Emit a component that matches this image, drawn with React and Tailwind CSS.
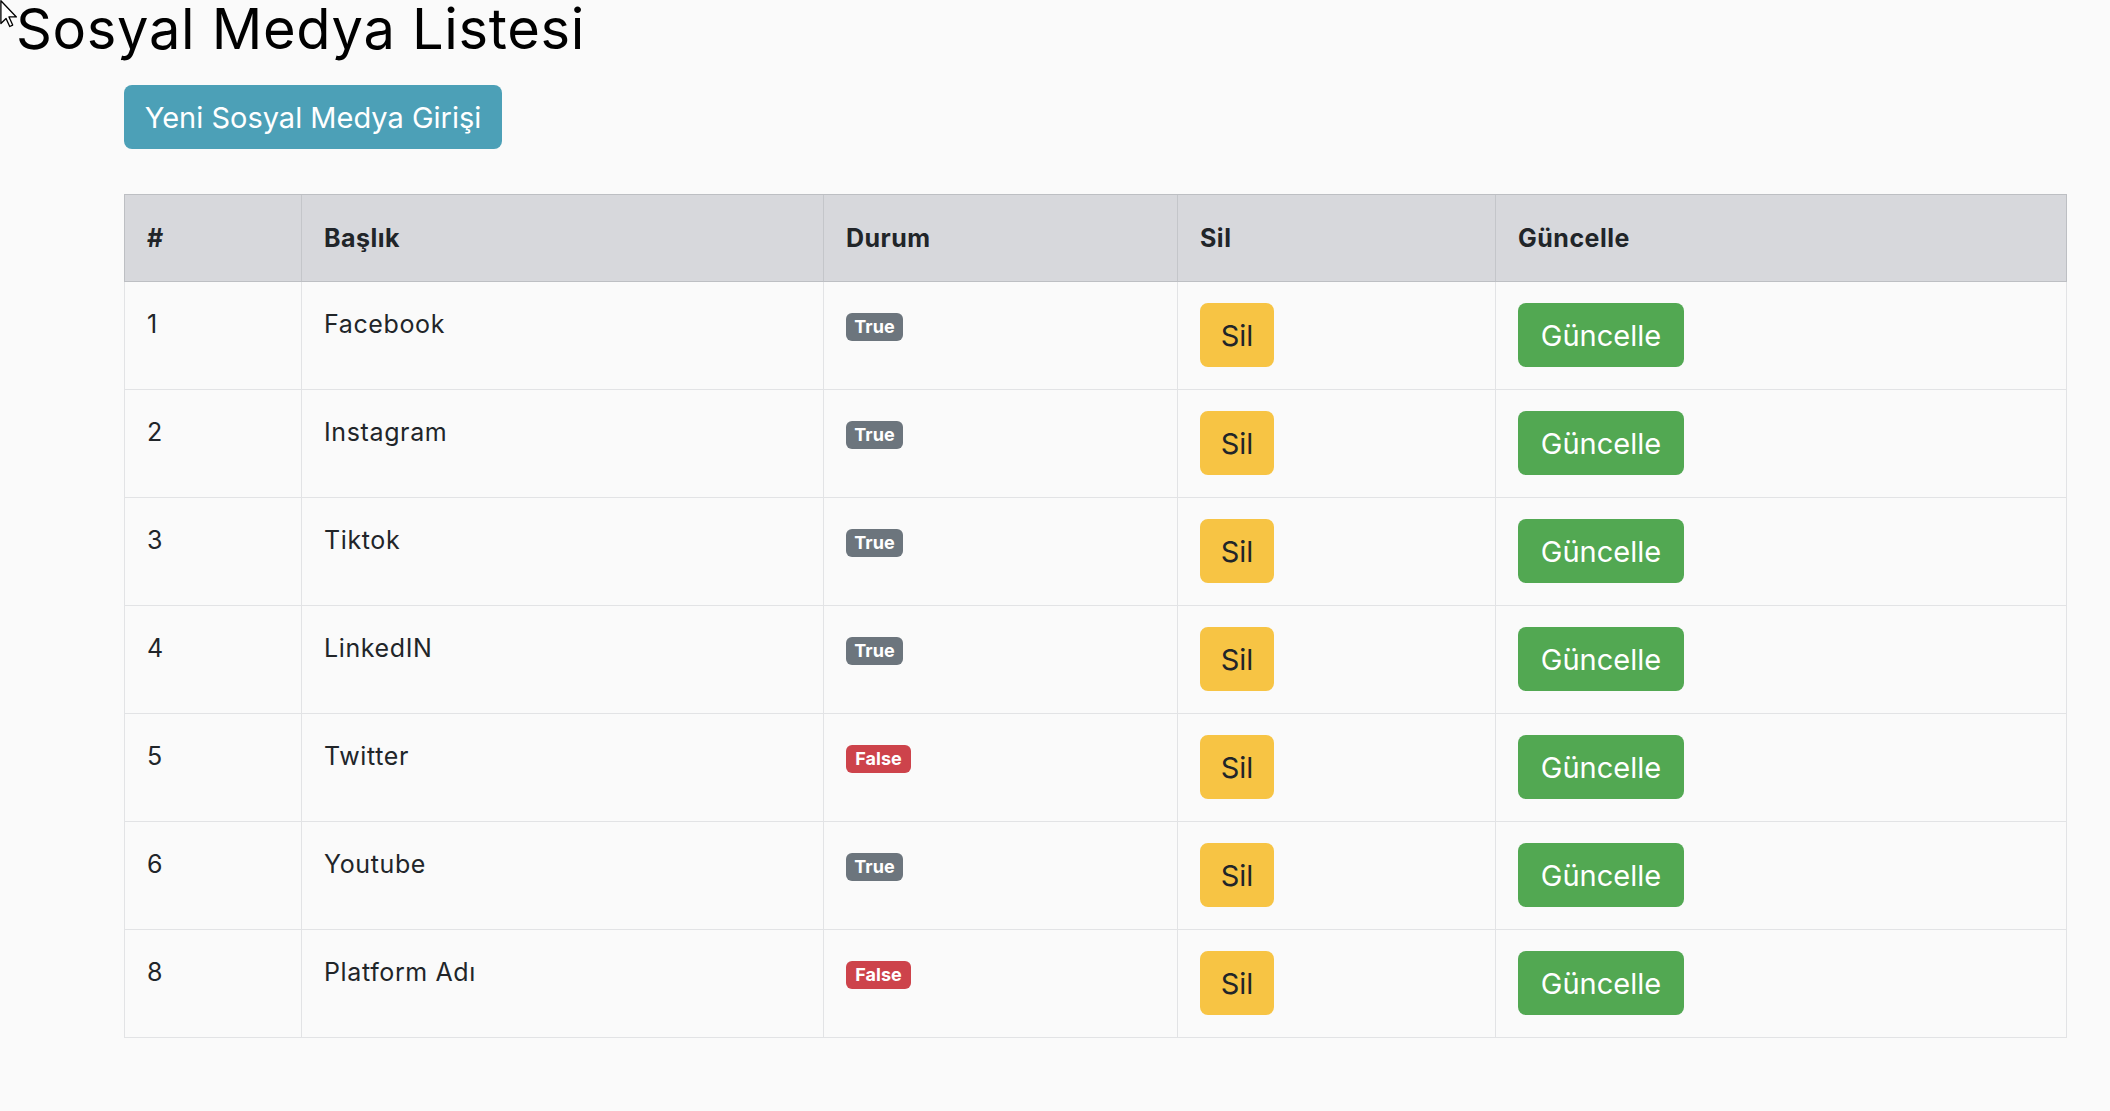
import React from "react";

const rows = [
  { id: 1, title: "Facebook", status: true },
  { id: 2, title: "Instagram", status: true },
  { id: 3, title: "Tiktok", status: true },
  { id: 4, title: "LinkedIN", status: true },
  { id: 5, title: "Twitter", status: false },
  { id: 6, title: "Youtube", status: true },
  { id: 8, title: "Platform Adı", status: false },
];

const cols = "grid grid-cols-[177px_522px_354px_318px_572px]";

function Cursor() {
  return (
    <svg className="absolute left-0 top-0" width="18" height="28" viewBox="0 0 12 19">
      <path d="M0.5 0.5 L0.5 16 L4 12.5 L6.5 18 L8.5 17 L6 11.5 L11 11.5 Z" fill="#fff" stroke="#000" strokeWidth="0.9" strokeLinejoin="round" />
    </svg>
  );
}

export default function App() {
  return (
    <div className="relative min-h-screen bg-[#fafafa] text-[#212529] font-['Inter','Liberation_Sans',sans-serif]">
      <Cursor />
      <h1 className="ml-[16px] pt-[1px] text-[56px] leading-none font-normal text-black tracking-[0.012em]">
        Sosyal Medya Listesi
      </h1>
      <div className="ml-[124px] mt-[28px]">
        <button className="w-[378px] h-[64px] rounded-[8px] bg-[#4ca0b7] text-white text-[29px] leading-none flex items-center justify-center">
          Yeni Sosyal Medya Girişi
        </button>
      </div>
      <div className="ml-[124px] mt-[45px] w-[1943px]">
        <div className={`${cols} h-[88px] bg-[#d7d8dc] border border-[#bdbfc3] font-bold text-[25px] leading-[43px] tracking-[0.02em] text-[#212529]`}>
          <div className="px-[22px] flex items-center border-r border-[#c4c6ca]">#</div>
          <div className="px-[22px] flex items-center border-r border-[#c4c6ca]">Başlık</div>
          <div className="px-[22px] flex items-center border-r border-[#c4c6ca]">Durum</div>
          <div className="px-[22px] flex items-center border-r border-[#c4c6ca]">Sil</div>
          <div className="px-[22px] flex items-center">Güncelle</div>
        </div>
        {rows.map((r) => (
          <div key={r.id} className={`${cols} h-[108px] border-x border-b border-[#e2e3e5] text-[25px] leading-[43px] tracking-[0.025em]`}>
            <div className="px-[22px] pt-[21px] border-r border-[#e2e3e5]">{r.id}</div>
            <div className="px-[22px] pt-[21px] border-r border-[#e2e3e5]">{r.title}</div>
            <div className="px-[22px] pt-[31px] border-r border-[#e2e3e5]">
              {r.status ? (
                <span className="flex w-[57px] h-[28px] items-center justify-center rounded-[6px] bg-[#6c757d] text-white text-[18px] font-bold leading-none tracking-normal">
                  True
                </span>
              ) : (
                <span className="flex w-[65px] h-[28px] items-center justify-center rounded-[6px] bg-[#cd434b] text-white text-[18px] font-bold leading-none tracking-normal">
                  False
                </span>
              )}
            </div>
            <div className="px-[22px] pt-[21px] border-r border-[#e2e3e5]">
              <button className="w-[74px] h-[64px] rounded-[8px] bg-[#f7c444] text-[#212529] text-[29px] leading-none tracking-normal flex items-center justify-center">
                Sil
              </button>
            </div>
            <div className="px-[22px] pt-[21px]">
              <button className="w-[166px] h-[64px] rounded-[8px] bg-[#52a852] text-white text-[29px] leading-none tracking-normal flex items-center justify-center">
                Güncelle
              </button>
            </div>
          </div>
        ))}
      </div>
    </div>
  );
}
